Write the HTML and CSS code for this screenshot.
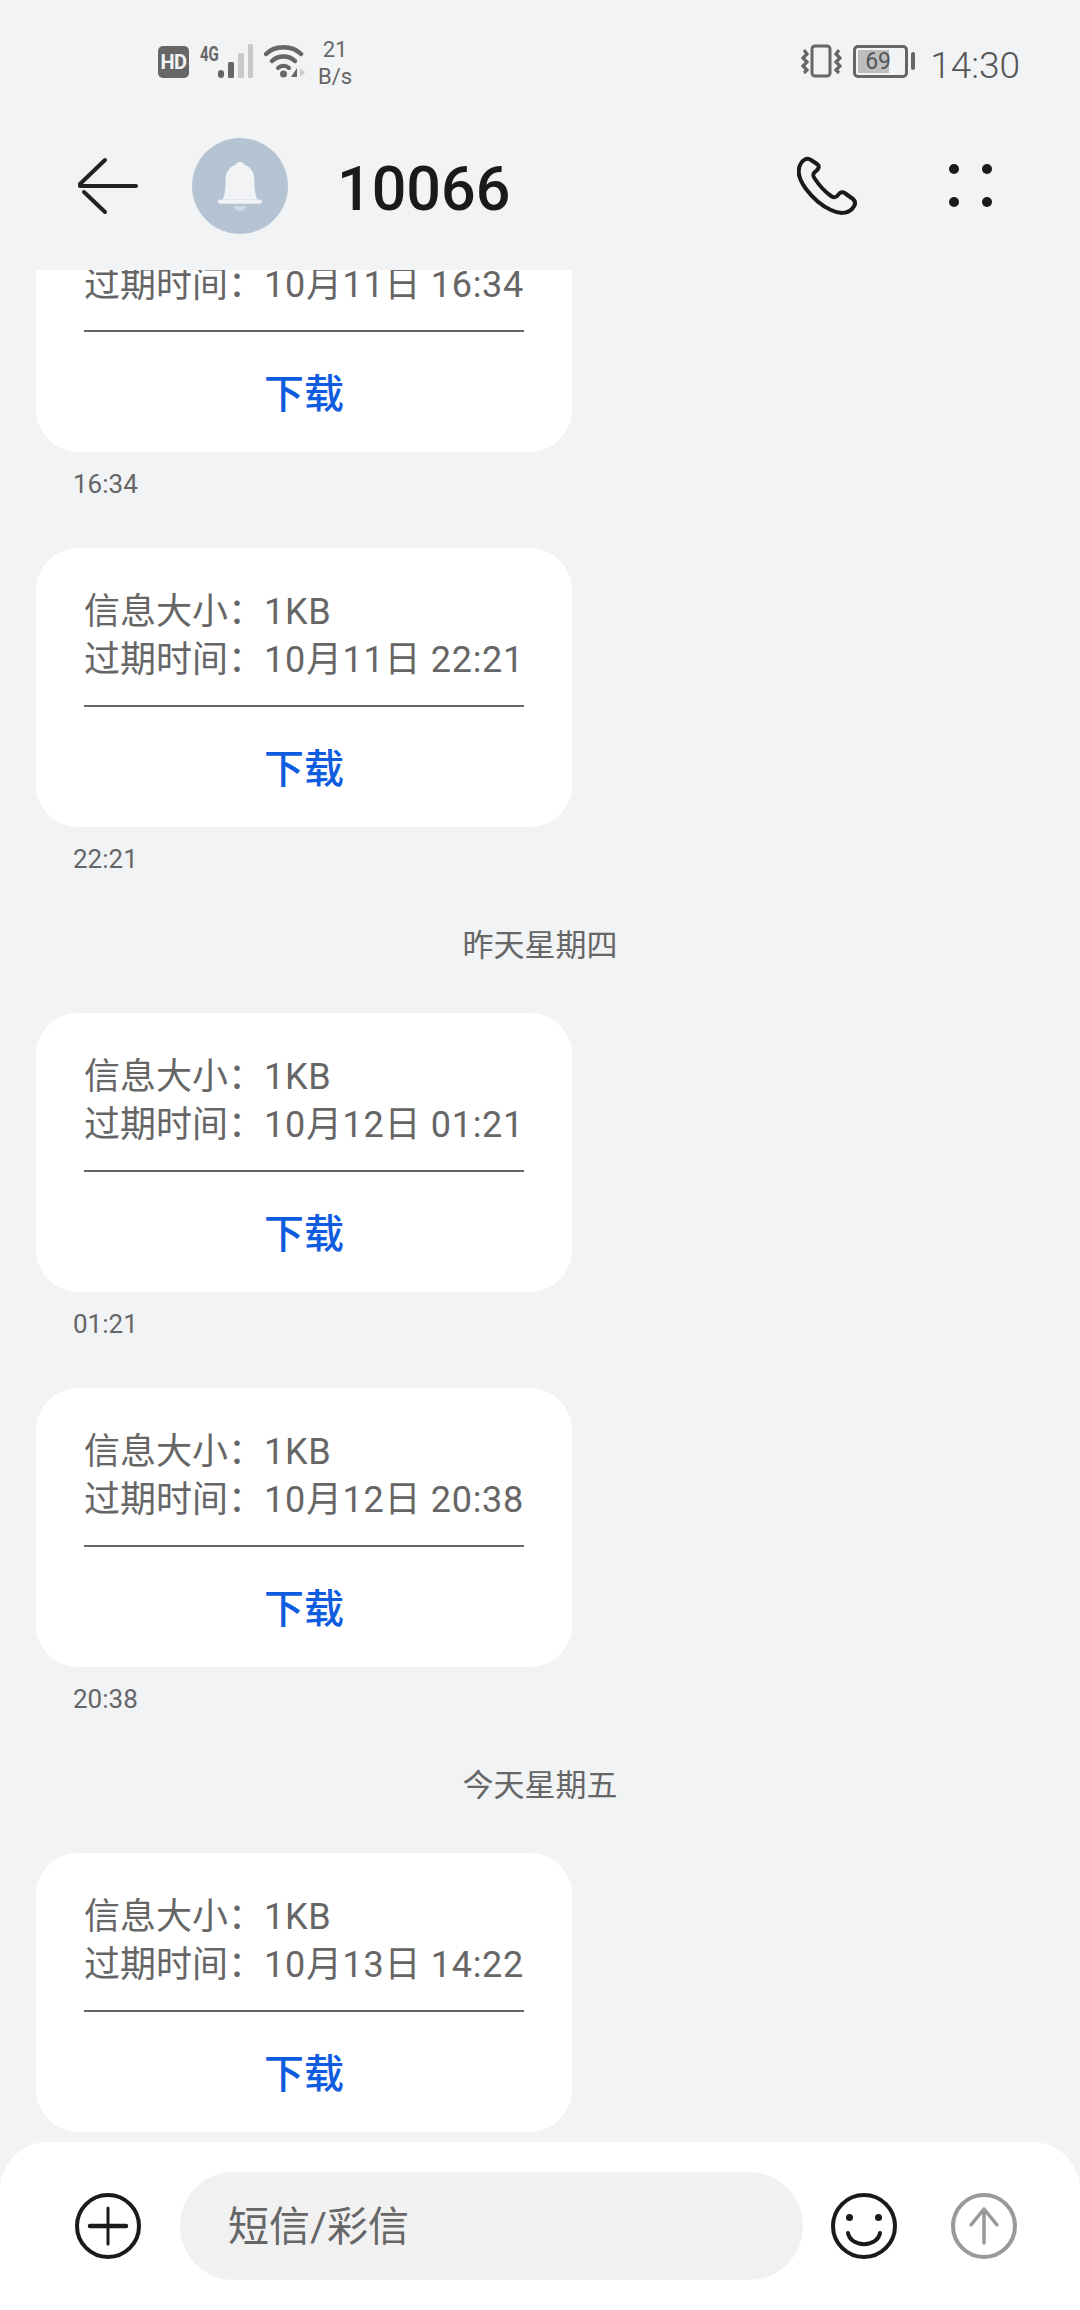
FILE: index.html
```html
<!DOCTYPE html>
<html lang="zh-CN">
<head>
    <meta charset="UTF-8">
    <meta name="viewport" content="width=device-width, initial-scale=1.0">
    <title>10066</title>
    <link rel="stylesheet" href="styles.css">
</head>
<body>
    <div class="top">
        <div class="status-bar">
            <div class="status-left">
                <span class="hd-badge">HD</span>
                <div class="signal">
                    <span class="net-type">4G</span>
                    <svg class="signal-bars" width="36" height="34" viewBox="0 0 36 34">
                        <rect x="0" y="26" width="6" height="8" rx="3" fill="#666"/>
                        <rect x="10" y="18" width="6" height="16" rx="1.5" fill="#666"/>
                        <rect x="20" y="9" width="6" height="25" rx="1.5" fill="#c9c9c9"/>
                        <rect x="30" y="0" width="5" height="34" rx="1.5" fill="#c9c9c9"/>
                    </svg>
                </div>
                <svg class="wifi" width="42" height="34" viewBox="0 0 42 34">
                    <path d="M2 10 C11 1 28 1 37 10" fill="none" stroke="#666" stroke-width="4.5" stroke-linecap="round"/>
                    <path d="M8 17 C14 11 25 11 31 17" fill="none" stroke="#666" stroke-width="4.5" stroke-linecap="round"/>
                    <path d="M14 24 C17 21 22 21 25 24" fill="none" stroke="#666" stroke-width="4" stroke-linecap="round"/>
                    <circle cx="19.5" cy="30" r="3.5" fill="#666"/>
                    <path d="M33 24 V33 H27 Z" fill="#666"/>
                    <path d="M36 24 V33 L41 28.5 Z" fill="#c9c9c9"/>
                </svg>
                <div class="speed">
                    <span>21</span>
                    <span>B/s</span>
                </div>
            </div>
            <div class="status-right">
                <svg class="vibrate" width="41" height="34" viewBox="0 0 41 34">
                    <rect x="11" y="2" width="18" height="30" rx="3" fill="none" stroke="#666" stroke-width="3"/>
                    <path d="M3 6 L6 10 L2 14 L6 18 L2 22 L6 26 L3 29" fill="none" stroke="#666" stroke-width="3.2"/>
                    <path d="M38 6 L35 10 L39 14 L35 18 L39 22 L35 26 L38 29" fill="none" stroke="#666" stroke-width="3.2"/>
                </svg>
                <div class="battery">
                    <div class="battery-body">
                        <div class="battery-level"></div>
                        <span class="battery-num">69</span>
                    </div>
                    <div class="battery-pin"></div>
                </div>
                <span class="clock">14:30</span>
            </div>
        </div>
        <div class="nav">
            <svg class="back" width="64" height="58" viewBox="0 0 64 58">
                <path d="M5 29 H61" fill="none" stroke="#222" stroke-width="4" stroke-linecap="round"/>
                <path d="M30 3 L5 27" fill="none" stroke="#222" stroke-width="4" stroke-linecap="round"/>
                <path d="M9 35 L30 55" fill="none" stroke="#222" stroke-width="4" stroke-linecap="round"/>
            </svg>
            <div class="avatar">
                <svg width="46" height="50" viewBox="0 0 48 52">
                    <path d="M24 1 C27 1 28 3 29 4 C35 6 39 11 39 20 C39 29 40 35 42 40 H6 C8 35 9 29 9 20 C9 11 13 6 19 4 C20 3 21 1 24 1 Z" fill="#f1f3f5"/>
                    <rect x="1" y="40" width="46" height="4.5" rx="2.2" fill="#f1f3f5"/>
                    <path d="M17 47 H31 C30 51 27 52 24 52 C21 52 18 51 17 47 Z" fill="#cfdae4"/>
                </svg>
            </div>
            <div class="title">10066</div>
            <svg class="call" width="60" height="60" viewBox="0 0 60 60">
                <path d="M14 4 C10 1 5 4 3 9 C0 16 3 25 9 33 C15 41 25 50 34 54 C42 58 50 58 55 53 C59 49 59 46 56 43 L49 38 C46 35 43 36 41 39 C39 42 37 42 34 40 C27 35 22 29 18 23 C16 20 15 18 18 16 C22 13 23 10 20 8 Z" fill="none" stroke="#1a1a1a" stroke-width="4" stroke-linejoin="round"/>
            </svg>
            <div class="more">
                <span class="dot"></span>
                <span class="dot"></span>
                <span class="dot"></span>
                <span class="dot"></span>
            </div>
        </div>
    </div>

    <div class="messages">
        <div class="list">
            <div class="msg">
                <div class="bubble">
                    <div class="info">信息大小&#xFF1A;<span class="val">1KB</span></div>
                    <div class="info">过期时间&#xFF1A;<span class="val">10月11日 16:34</span></div>
                    <div class="line"></div>
                    <div class="download">下载</div>
                </div>
                <div class="time">16:34</div>
            </div>
            <div class="msg">
                <div class="bubble">
                    <div class="info">信息大小&#xFF1A;<span class="val">1KB</span></div>
                    <div class="info">过期时间&#xFF1A;<span class="val">10月11日 22:21</span></div>
                    <div class="line"></div>
                    <div class="download">下载</div>
                </div>
                <div class="time">22:21</div>
            </div>
            <div class="date">昨天星期四</div>
            <div class="msg">
                <div class="bubble">
                    <div class="info">信息大小&#xFF1A;<span class="val">1KB</span></div>
                    <div class="info">过期时间&#xFF1A;<span class="val">10月12日 01:21</span></div>
                    <div class="line"></div>
                    <div class="download">下载</div>
                </div>
                <div class="time">01:21</div>
            </div>
            <div class="msg">
                <div class="bubble">
                    <div class="info">信息大小&#xFF1A;<span class="val">1KB</span></div>
                    <div class="info">过期时间&#xFF1A;<span class="val">10月12日 20:38</span></div>
                    <div class="line"></div>
                    <div class="download">下载</div>
                </div>
                <div class="time">20:38</div>
            </div>
            <div class="date">今天星期五</div>
            <div class="msg">
                <div class="bubble">
                    <div class="info">信息大小&#xFF1A;<span class="val">1KB</span></div>
                    <div class="info">过期时间&#xFF1A;<span class="val">10月13日 14:22</span></div>
                    <div class="line"></div>
                    <div class="download">下载</div>
                </div>
            </div>
        </div>
    </div>

    <div class="composer">
        <svg class="icon-plus" width="66" height="66" viewBox="0 0 66 66">
            <circle cx="33" cy="33" r="31" fill="none" stroke="#1a1a1a" stroke-width="4"/>
            <path d="M15 33 H51" fill="none" stroke="#1a1a1a" stroke-width="4.5" stroke-linecap="round"/>
            <path d="M33 15 V51" fill="none" stroke="#1a1a1a" stroke-width="3" stroke-linecap="round"/>
        </svg>
        <div class="input">短信/彩信</div>
        <svg class="icon-smile" width="66" height="66" viewBox="0 0 66 66">
            <circle cx="33" cy="33" r="31" fill="none" stroke="#1a1a1a" stroke-width="4"/>
            <circle cx="18.5" cy="24.5" r="3.5" fill="#1a1a1a"/>
            <circle cx="47.5" cy="24.5" r="3.5" fill="#1a1a1a"/>
            <path d="M17 40 C20 55 46 55 49 40" fill="none" stroke="#1a1a1a" stroke-width="4" stroke-linecap="round"/>
        </svg>
        <svg class="icon-send" width="66" height="66" viewBox="0 0 66 66">
            <circle cx="33" cy="33" r="31" fill="none" stroke="#999" stroke-width="4"/>
            <path d="M33 50 V16 M20 32 L33 16 L46 32" fill="none" stroke="#999" stroke-width="3.5" stroke-linecap="round" stroke-linejoin="round"/>
        </svg>
    </div>
</body>
</html>
```

FILE: styles.css
```css
* {
    box-sizing: border-box;
}
html, body {
    margin: 0;
    padding: 0;
}
body {
    width: 1080px;
    height: 2310px;
    display: flex;
    flex-direction: column;
    overflow: hidden;
    background-color: #f1f3f5;
    color: #666;
    font-family: Roboto, "Noto Sans CJK SC", sans-serif;
}

/* top area */
.top {
    flex: none;
    height: 270px;
}
.status-bar {
    height: 124px;
    display: flex;
    justify-content: space-between;
    padding: 44px 60px 0 158px;
}
.status-left, .status-right {
    display: flex;
    align-items: flex-start;
}
.hd-badge {
    width: 31px;
    height: 32px;
    margin-top: 2px;
    background-color: #666;
    border-radius: 5px;
    color: #f1f3f5;
    font-size: 20px;
    font-weight: 700;
    line-height: 32px;
    text-align: center;
    letter-spacing: -0.5px;
}
.signal {
    position: relative;
    width: 54px;
    height: 34px;
    margin-left: 11px;
}
.net-type {
    position: absolute;
    left: 0;
    top: 1px;
    font-size: 20px;
    font-weight: 700;
    line-height: 18px;
    transform: scaleX(0.75);
    transform-origin: left center;
}
.signal-bars {
    position: absolute;
    left: 18px;
    top: 0;
}
.wifi {
    margin-left: 10px;
}
.speed {
    display: flex;
    flex-direction: column;
    align-items: center;
    margin-left: 12px;
    margin-top: -8px;
    font-size: 22px;
    line-height: 27px;
}
.vibrate {
    margin-right: 11px;
}
.battery {
    display: flex;
    align-items: center;
    height: 34px;
}
.battery-body {
    position: relative;
    width: 55px;
    height: 33px;
    border: 3px solid #666;
    border-radius: 5px;
}
.battery-level {
    position: absolute;
    left: 2px;
    top: 2px;
    bottom: 2px;
    width: 31px;
    background-color: #bdbdbd;
}
.battery-num {
    position: absolute;
    left: 9px;
    top: 0;
    font-size: 23px;
    line-height: 27px;
    color: #555;
}
.battery-pin {
    width: 4px;
    height: 18px;
    margin-left: 3px;
    background-color: #666;
    border-radius: 2px;
}
.clock {
    margin-left: 15px;
    margin-top: 0;
    font-size: 37px;
    line-height: 44px;
    font-weight: 300;
    color: #555;
}
.nav {
    height: 124px;
    display: flex;
    align-items: center;
    padding-left: 75px;
}
.back {
    flex: none;
}
.avatar {
    width: 96px;
    height: 96px;
    margin-left: 53px;
    display: flex;
    align-items: center;
    justify-content: center;
    background-color: #b4c4d3;
    border-radius: 50%;
}
.title {
    margin-left: 49px;
    padding-top: 5px;
    width: 460px;
    font-size: 61px;
    font-weight: 500;
    color: #1a1a1a;
}
.call {
    margin-top: -1px;
}
.more {
    display: grid;
    grid-template-columns: 10px 10px;
    gap: 23px;
    margin-left: 92px;
    margin-top: -2px;
}
.dot {
    width: 10px;
    height: 10px;
    background-color: #1a1a1a;
    border-radius: 50%;
}

/* message list */
.messages {
    flex: 1;
    overflow: hidden;
}
.list {
    margin-top: -97px;
}
.msg {
    margin-bottom: 46px;
    padding-left: 36px;
}
.bubble {
    width: 536px;
    height: 279px;
    padding: 40px 48px 0;
    background-color: #fff;
    border-radius: 42px;
}
.info {
    font-size: 36px;
    line-height: 48px;
    white-space: nowrap;
}
.val {
    letter-spacing: 0.7px;
}
.line {
    height: 2px;
    margin-top: 21px;
    background-color: #666;
}
.download {
    margin-top: 37px;
    color: #0f5ce0;
    font-size: 40px;
    font-weight: 500;
    line-height: 52px;
    text-align: center;
}
.time {
    margin-top: 14px;
    padding-left: 37px;
    font-size: 26px;
    line-height: 36px;
}
.date {
    height: 46px;
    margin-bottom: 44px;
    font-size: 31px;
    line-height: 46px;
    text-align: center;
}

/* bottom input */
.composer {
    flex: none;
    height: 168px;
    display: flex;
    align-items: center;
    padding-left: 75px;
    background-color: #fff;
    border-radius: 48px 48px 0 0;
}
.input {
    width: 623px;
    height: 108px;
    margin-left: 39px;
    padding-left: 48px;
    background-color: #f1f1f2;
    border-radius: 54px;
    font-size: 41px;
    line-height: 110px;
}
.icon-smile {
    margin-left: 28px;
}
.icon-send {
    margin-left: 54px;
}
```
